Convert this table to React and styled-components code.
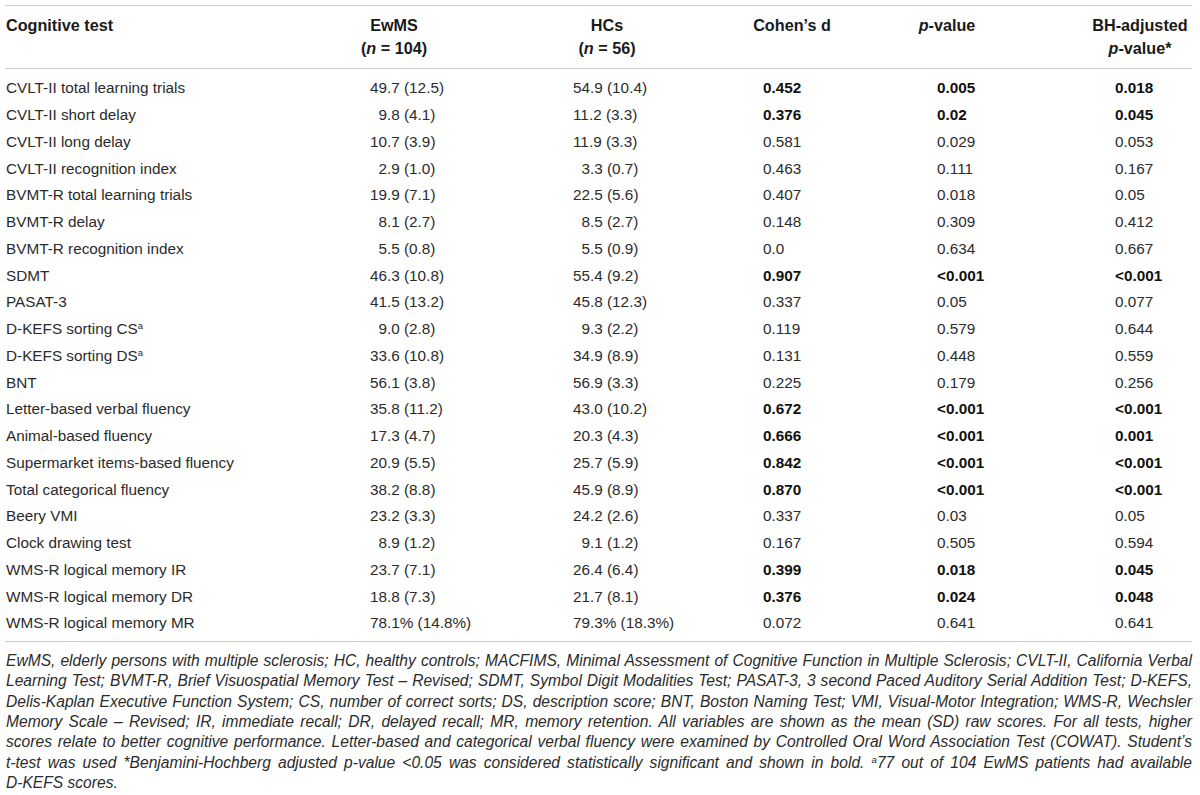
import React from "react";
import styled, { createGlobalStyle } from "styled-components";

const Global = createGlobalStyle`
  html, body { margin: 0; padding: 0; background: #ffffff; }
  body { font-family: "Liberation Sans", Arial, sans-serif; color: #2b2b2b; }
`;

const Page = styled.div`
  width: 1187px;
  margin-left: 5px;
  padding-top: 5px;
`;

const Table = styled.div`
  border-top: 1px solid #cccccc;
  border-bottom: 1px solid #cccccc;
`;

const Grid = styled.div`
  display: grid;
  grid-template-columns: 287px 204px 222px 148px 162px 164px;
`;

const Head = styled(Grid)`
  padding: 8px 0;
  border-bottom: 1px solid #cccccc;
  font-weight: 700;
  font-size: 16.2px;
  line-height: 23px;
  color: #1a1a1a;
`;

const HeadCell = styled.div`
  text-align: ${(p) => (p.$left ? "left" : "center")};
  padding-left: ${(p) => p.$pl || 0}px;
  white-space: nowrap;
`;

const Body = styled.div`
  padding: 6px 0 4px;
`;

const Row = styled(Grid)`
  height: 26.75px;
  align-items: center;
  font-size: 15.3px;
  line-height: 18px;
`;

const Cell = styled.div`
  padding-left: ${(p) => p.$pl}px;
  white-space: nowrap;
  font-weight: ${(p) => (p.$bold ? 700 : 400)};
  color: ${(p) => (p.$bold ? "#111111" : "#2b2b2b")};
`;

const Pad = styled.span`
  display: inline-block;
  width: 0.556em;
`;

const Sup = styled.sup`
  font-size: 0.62em;
  line-height: 0;
  vertical-align: 0.55em;
`;

const Foot = styled.div`
  padding-top: 9px;
  font-style: italic;
  font-size: 15.6px;
  line-height: 20.4px;
  color: #2b2b2b;
`;

const FootLine = styled.div`
  text-align: justify;
  text-align-last: ${(p) => (p.$last ? "left" : "justify")};
  padding-left: 1px;
  white-space: nowrap;
`;

const cols = [1, 78, 77, 45, 71, 87];

const rows = [
  ["CVLT-II total learning trials", "49.7 (12.5)", "54.9 (10.4)", "0.452", "0.005", "0.018", true],
  ["CVLT-II short delay", "9.8 (4.1)", "11.2 (3.3)", "0.376", "0.02", "0.045", true],
  ["CVLT-II long delay", "10.7 (3.9)", "11.9 (3.3)", "0.581", "0.029", "0.053"],
  ["CVLT-II recognition index", "2.9 (1.0)", "3.3 (0.7)", "0.463", "0.111", "0.167"],
  ["BVMT-R total learning trials", "19.9 (7.1)", "22.5 (5.6)", "0.407", "0.018", "0.05"],
  ["BVMT-R delay", "8.1 (2.7)", "8.5 (2.7)", "0.148", "0.309", "0.412"],
  ["BVMT-R recognition index", "5.5 (0.8)", "5.5 (0.9)", "0.0", "0.634", "0.667"],
  ["SDMT", "46.3 (10.8)", "55.4 (9.2)", "0.907", "<0.001", "<0.001", true],
  ["PASAT-3", "41.5 (13.2)", "45.8 (12.3)", "0.337", "0.05", "0.077"],
  ["D-KEFS sorting CS", "9.0 (2.8)", "9.3 (2.2)", "0.119", "0.579", "0.644", false, true],
  ["D-KEFS sorting DS", "33.6 (10.8)", "34.9 (8.9)", "0.131", "0.448", "0.559", false, true],
  ["BNT", "56.1 (3.8)", "56.9 (3.3)", "0.225", "0.179", "0.256"],
  ["Letter-based verbal fluency", "35.8 (11.2)", "43.0 (10.2)", "0.672", "<0.001", "<0.001", true],
  ["Animal-based fluency", "17.3 (4.7)", "20.3 (4.3)", "0.666", "<0.001", "0.001", true],
  ["Supermarket items-based fluency", "20.9 (5.5)", "25.7 (5.9)", "0.842", "<0.001", "<0.001", true],
  ["Total categorical fluency", "38.2 (8.8)", "45.9 (8.9)", "0.870", "<0.001", "<0.001", true],
  ["Beery VMI", "23.2 (3.3)", "24.2 (2.6)", "0.337", "0.03", "0.05"],
  ["Clock drawing test", "8.9 (1.2)", "9.1 (1.2)", "0.167", "0.505", "0.594"],
  ["WMS-R logical memory IR", "23.7 (7.1)", "26.4 (6.4)", "0.399", "0.018", "0.045", true],
  ["WMS-R logical memory DR", "18.8 (7.3)", "21.7 (8.1)", "0.376", "0.024", "0.048", true],
  ["WMS-R logical memory MR", "78.1% (14.8%)", "79.3% (18.3%)", "0.072", "0.641", "0.641"],
];

const Mean = ({ v }) => {
  const single = /^\d\./.test(v);
  return (
    <>
      {single && <Pad />}
      {v}
    </>
  );
};

const footLines = [
  "EwMS, elderly persons with multiple sclerosis; HC, healthy controls; MACFIMS, Minimal Assessment of Cognitive Function in Multiple Sclerosis; CVLT-II, California Verbal",
  "Learning Test; BVMT-R, Brief Visuospatial Memory Test – Revised; SDMT, Symbol Digit Modalities Test; PASAT-3, 3 second Paced Auditory Serial Addition Test; D-KEFS,",
  "Delis-Kaplan Executive Function System; CS, number of correct sorts; DS, description score; BNT, Boston Naming Test; VMI, Visual-Motor Integration; WMS-R, Wechsler",
  "Memory Scale – Revised; IR, immediate recall; DR, delayed recall; MR, memory retention. All variables are shown as the mean (SD) raw scores. For all tests, higher",
  "scores relate to better cognitive performance. Letter-based and categorical verbal fluency were examined by Controlled Oral Word Association Test (COWAT). Student’s",
];

export default function App() {
  return (
    <Page>
      <Global />
      <Table>
        <Head>
          <HeadCell $left $pl={1}>Cognitive test</HeadCell>
          <HeadCell>
            EwMS
            <br />(<i>n</i> = 104)
          </HeadCell>
          <HeadCell>
            HCs
            <br />(<i>n</i> = 56)
          </HeadCell>
          <HeadCell>Cohen’s d</HeadCell>
          <HeadCell>
            <i>p</i>-value
          </HeadCell>
          <HeadCell $pl={60}>
            BH-adjusted
            <br />
            <i>p</i>-value*
          </HeadCell>
        </Head>
        <Body>
          {rows.map((r) => (
            <Row key={r[0]}>
              <Cell $pl={cols[0]}>
                {r[0]}
                {r[7] && <Sup>a</Sup>}
              </Cell>
              <Cell $pl={cols[1]}>
                <Mean v={r[1]} />
              </Cell>
              <Cell $pl={cols[2]}>
                <Mean v={r[2]} />
              </Cell>
              <Cell $pl={cols[3]} $bold={r[6]}>{r[3]}</Cell>
              <Cell $pl={cols[4]} $bold={r[6]}>{r[4]}</Cell>
              <Cell $pl={cols[5]} $bold={r[6]}>{r[5]}</Cell>
            </Row>
          ))}
        </Body>
      </Table>
      <Foot>
        {footLines.map((l) => (
          <FootLine key={l}>{l}</FootLine>
        ))}
        <FootLine>
          t-test was used *Benjamini-Hochberg adjusted p-value &lt;0.05 was considered statistically significant and shown in bold.{" "}
          <Sup>a</Sup>77 out of 104 EwMS patients had available
        </FootLine>
        <FootLine $last>D-KEFS scores.</FootLine>
      </Foot>
    </Page>
  );
}
